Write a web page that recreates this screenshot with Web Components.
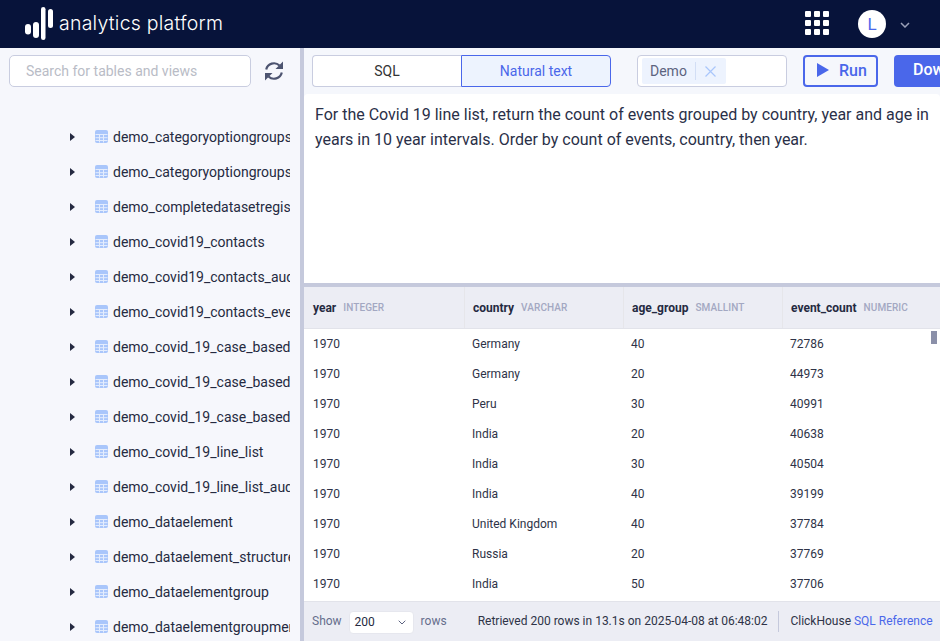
<!DOCTYPE html>
<html><head><meta charset="utf-8">
<style>
html,body{margin:0;padding:0;height:100%;overflow:hidden}
body{font-family:Roboto,"Liberation Sans",sans-serif;color:#252a41;background:#f6f7fc}
app-shell{width:940px;height:641px}
</style></head><body>
<app-shell>
  <top-bar slot="top"></top-bar>
  <side-panel slot="side"></side-panel>
  <query-bar slot="tools"></query-bar>
  <query-editor slot="editor">For the Covid 19 line list, return the count of events grouped by country, year and age in years in 10 year intervals. Order by count of events, country, then year.</query-editor>
  <result-table slot="table"></result-table>
  <status-bar slot="status"></status-bar>
</app-shell>
<script>
function def(name,css,html,init){
  customElements.define(name,class extends HTMLElement{
    constructor(){super();const r=this.attachShadow({mode:'open'});r.innerHTML='<style>'+css+'</style>'+html;if(init)init.call(this,r)}
  });
}
def('app-shell',`:host{display:grid;grid-template-columns:300px 4px 636px;grid-template-rows:48px 1fr;overflow:hidden}
.top{grid-column:1/4}.sep{background:#c5c9dc}
.side{min-height:0;overflow:hidden;display:flex}
.main{min-width:0;min-height:0;display:grid;grid-template-rows:46px 189px 4px 1fr;overflow:hidden;background:#f5f7fc}
.hsep{background:#c5c9dc}`,
`<div class="top"><slot name="top"></slot></div><div class="side"><slot name="side"></slot></div><div class="sep"></div>
<div class="main"><slot name="tools"></slot><slot name="editor"></slot><div class="hsep"></div><div style="display:flex;flex-direction:column;min-height:0"><slot name="table"></slot><slot name="status"></slot></div></div>`);

def('top-bar',`:host{display:flex;align-items:center;height:48px;background:#07133a;color:#fff;box-sizing:border-box;padding-left:25px}
.logo{display:block;margin:-7px 6px 0 0}
.name{font:300 19.5px/24px Inter,Lato,sans-serif;letter-spacing:.24px;margin-top:-2px}
.sp{flex:1}
.grid{display:grid;grid-template-columns:repeat(3,6px);grid-auto-rows:6px;gap:3px;margin-right:29px;margin-top:-2px}
.grid i{background:#fff;border-radius:1px}
.av{width:28px;height:28px;border-radius:50%;background:#fff;color:#4a67ea;font:400 17px/28px Roboto,sans-serif;text-align:center;margin-right:14px}
.ch{margin-right:30px;display:block;margin-top:2px}`,
`<svg class="logo" width="28" height="41" viewBox="0 0 28 41"><g fill="#fff"><rect x="0" y="24" width="6" height="10.500" rx="3"/><rect x="8" y="22" width="6" height="16" rx="3"/><rect x="16" y="7" width="4.500" height="33" rx="2.250"/><rect x="23" y="9" width="5" height="19" rx="2.500"/></g></svg>
<span class="name">analytics platform</span><span class="sp"></span>
<div class="grid"><i></i><i></i><i></i><i></i><i></i><i></i><i></i><i></i><i></i></div>
<div class="av">L</div>
<svg class="ch" width="10" height="6" viewBox="0 0 10 6"><path d="M1 1l4 4 4-4" fill="none" stroke="#9aa0b8" stroke-width="1.500"/></svg>`);

def('tree-row',`:host{display:flex;align-items:center;height:35px;flex:none;padding-left:70px;font-size:14px;color:#252a41}
.t{width:0;height:0;border-left:5px solid #252a41;border-top:4px solid transparent;border-bottom:4px solid transparent;margin-right:20px}
svg{display:block;margin-right:5px;flex:none}
.l{width:177px;overflow:hidden;white-space:nowrap}`,
`<div class="t"></div><svg width="13" height="13" viewBox="0 0 13 13"><rect width="13" height="13" rx="2" fill="#a9c6fb"/><path d="M.5 4.500h12M.5 7.700h12M.5 10.500h12M4.500 4.500v8M8.500 4.500v8" stroke="#e4edfd" stroke-width="1"/></svg><div class="l"><slot></slot></div>`);

def('side-panel',`:host{display:flex;flex-direction:column;flex:1;width:300px;background:#f6f7fc;overflow:hidden}
.s{display:flex;align-items:center;padding:7px 0 0 9px;height:32px;flex:none}
.i{width:242px;height:32px;box-sizing:border-box;border:1px solid #c9cde0;border-radius:5px;background:#fff;font-size:14px;line-height:30px;color:#b9bcc6;padding-left:16px}
svg{margin-left:12px;display:block}
.l{padding-top:32px;display:flex;flex-direction:column}`,
`<div class="s"><div class="i">Search for tables and views</div>
<svg width="22" height="22" viewBox="0 0 22 22"><path d="M3.200 9.500A8 8 0 0 1 16.500 5.500" fill="none" stroke="#4d5470" stroke-width="2.200"/><path d="M20 1.500v7.500h-7.500z" fill="#4d5470"/><path d="M18.800 12.500A8 8 0 0 1 5.500 16.500" fill="none" stroke="#4d5470" stroke-width="2.200"/><path d="M2 20.500v-7.500h7.500z" fill="#4d5470"/></svg></div>
<div class="l"><slot></slot></div>`,function(){
 ['demo_categoryoptiongroupsetmembers','demo_categoryoptiongroupsetstructure','demo_completedatasetregistration','demo_covid19_contacts','demo_covid19_contacts_audit','demo_covid19_contacts_events','demo_covid_19_case_based_a','demo_covid_19_case_based_b','demo_covid_19_case_based_c','demo_covid_19_line_list','demo_covid_19_line_list_audit','demo_dataelement','demo_dataelement_structure','demo_dataelementgroup','demo_dataelementgroupmembers'].forEach(t=>{const e=document.createElement('tree-row');e.textContent=t;this.append(e)})
});

def('query-bar',`:host{display:flex;align-items:flex-start;padding:7px 0 0 8px;height:46px;box-sizing:border-box;overflow:hidden;font-size:14px}
.seg{display:flex;width:299px;height:32px;flex:none;box-sizing:border-box}
.seg div{flex:1;text-align:center;line-height:30px;box-sizing:border-box}
.a{background:#fff;border:1px solid #c9cde0;border-right:0;border-radius:4px 0 0 4px;color:#333}
.b{background:#edf3fe;border:1px solid #4a67ea;border-radius:0 4px 4px 0;color:#4a67ea}
.sel{margin-left:26px;width:150px;height:32px;flex:none;box-sizing:border-box;border:1px solid #c9cde0;border-radius:4px;background:#fff;padding:2px 4px}
.tag{display:flex;align-items:center;width:84px;height:26px;background:#edf3fe;border-radius:2px;color:#5c6380}
.tag span{padding:0 8px;line-height:18px;border-right:1px solid #d2def5}
.tag svg{margin-left:9px}
.run{margin-left:16px;width:75px;height:32px;flex:none;box-sizing:border-box;border:2px solid #4a67ea;border-radius:4px;background:#f5f7fc;color:#4a67ea;font-weight:500;font-size:16px;display:flex;align-items:center;padding:0 0 2px 12px;gap:10px}
.dl{margin-left:16px;width:120px;height:32px;flex:none;background:#4a67ea;color:#fff;border-radius:4px;font-weight:500;font-size:16px;line-height:30px;padding-left:19px;box-sizing:border-box}`,
`<div class="seg"><div class="a">SQL</div><div class="b">Natural text</div></div>
<div class="sel"><div class="tag"><span>Demo</span><svg width="11" height="11" viewBox="0 0 11 11"><path d="M.5.500l10 10M10.500.500l-10 10" stroke="#a9c6fb" stroke-width="1.200"/></svg></div></div>
<div class="run"><svg width="12" height="14" viewBox="0 0 12 14"><path d="M0 0l12 7-12 7z" fill="#4a67ea"/></svg>Run</div>
<div class="dl">Download</div>`);

def('query-editor',`:host{display:block;background:#fff;border-radius:4px 4px 0 0;padding:8px 0 8px 11px;box-sizing:border-box;font-size:16px;line-height:25px;color:#2a3048;overflow:hidden;width:636px}`,`<slot></slot>`);

const rows=[['1970','Germany','40','72786'],['1970','Germany','20','44973'],['1970','Peru','30','40991'],['1970','India','20','40638'],['1970','India','30','40504'],['1970','India','40','39199'],['1970','United Kingdom','40','37784'],['1970','Russia','20','37769'],['1970','India','50','37706']];
def('result-table',`:host{display:block;flex:none;height:314px;background:#fff;overflow:hidden;position:relative;font-size:12px}
.r{display:grid;grid-template-columns:160px 159px 159px 1fr;width:636px}
.h{height:42px;background:#ecedf4;border-bottom:1px solid #e2e3ea;box-sizing:border-box;grid-template-columns:161px 159px 159px 1fr}
.h div{display:flex;align-items:center;padding-left:8px;border-right:1px solid #e6e6ea;gap:7px}
.h div:first-child{padding-left:9px}
.h div:last-child{border-right:0}
.h b{font-weight:700;color:#252a41;font-size:12px}
.h span{font-size:10px;font-weight:500;color:#a3a8c2;letter-spacing:.1px}
.d{height:30px;align-items:center;color:#2e3347}
.d div{padding-left:9px}
.d div:nth-child(n+2){padding-left:8px}
.bar{position:absolute;right:3px;top:44px;width:6px;height:13px;background:#8b90a9}`,
`<div class="r h"><div><b>year</b><span>INTEGER</span></div><div><b>country</b><span>VARCHAR</span></div><div><b>age_group</b><span>SMALLINT</span></div><div><b>event_count</b><span>NUMERIC</span></div></div>`+rows.map(r=>'<div class="r d">'+r.map(c=>'<div>'+c+'</div>').join('')+'</div>').join('')+`<div class="bar"></div>`);

def('status-bar',`:host{display:flex;align-items:center;height:40px;flex:none;background:#ecedf4;font-size:12px;color:#2e3347;box-sizing:border-box;padding:0 0 2px 8px;border-top:1px solid #e2e3ea;white-space:nowrap}
.m{color:#666d8c}
.sel{width:65px;height:23px;margin:3px 7px 0 7px;background:#fff;border:1px solid #e6e7ee;border-radius:4px;box-sizing:border-box;display:flex;align-items:center;justify-content:space-between;padding:0 7px 0 5px;color:#252a41}
.ret{margin-left:31px}
.v{width:1px;height:21px;background:#c5c9dc;margin:2px 11px 0}
a{color:#4a67ea;text-decoration:none}`,
`<span class="m">Show</span><div class="sel">200<svg width="8" height="5" viewBox="0 0 8 5"><path d="M.700.700L4 4 7.300.700" fill="none" stroke="#5c6380" stroke-width="1"/></svg></div><span class="m">rows</span>
<span class="ret">Retrieved 200 rows in 13.1s on 2025-04-08 at 06:48:02</span><span class="v"></span><span>ClickHouse&nbsp;<a>SQL Reference</a></span>`);
</script>
</body></html>
